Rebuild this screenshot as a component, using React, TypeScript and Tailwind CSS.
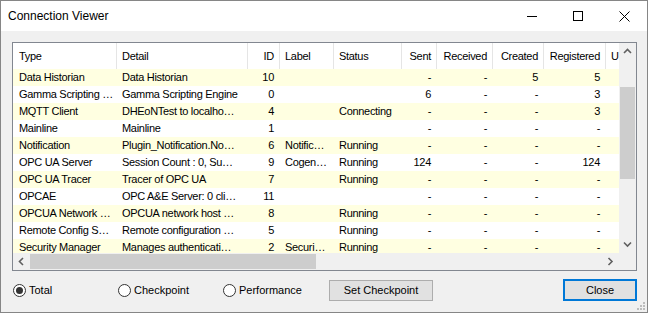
import React from 'react';

const cols = [
  { label: 'Type', cls: 'w-[104px] pl-[6px]', right: false },
  { label: 'Detail', cls: 'w-[131px] pl-[5px]', right: false },
  { label: 'ID', cls: 'w-[32px] pr-[5px] justify-end', right: true },
  { label: 'Label', cls: 'w-[54px] pl-[5px]', right: false },
  { label: 'Status', cls: 'w-[68px] pl-[5px]', right: false },
  { label: 'Sent', cls: 'w-[35px] pr-[5px] justify-end', right: true },
  { label: 'Received', cls: 'w-[56px] pr-[5px] justify-end', right: true },
  { label: 'Created', cls: 'w-[51px] pr-[5px] justify-end', right: true },
  { label: 'Registered', cls: 'w-[62px] pr-[5px] justify-end', right: true },
  { label: 'U', cls: 'w-[80px] pl-[5px]', right: false },
];

const rowCls = [
  'w-[104px] pl-[6px]',
  'w-[131px] pl-[5px]',
  'w-[32px] pr-[6px] text-right',
  'w-[54px] pl-[5px]',
  'w-[68px] pl-[5px]',
  'w-[35px] pr-[6px] text-right',
  'w-[56px] pr-[6px] text-right',
  'w-[51px] pr-[6px] text-right',
  'w-[62px] pr-[6px] text-right',
  'w-[80px] pl-[5px]',
];

const rows = [
  ['Data Historian', 'Data Historian', '10', '', '', '-', '-', '5', '5', ''],
  ['Gamma Scripting …', 'Gamma Scripting Engine', '0', '', '', '6', '-', '-', '3', ''],
  ['MQTT Client', 'DHEoNTest to localho…', '4', '', 'Connecting', '-', '-', '-', '3', ''],
  ['Mainline', 'Mainline', '1', '', '', '-', '-', '-', '-', ''],
  ['Notification', 'Plugin_Notification.No…', '6', 'Notific…', 'Running', '-', '-', '-', '-', ''],
  ['OPC UA Server', 'Session Count : 0, Su…', '9', 'Cogen…', 'Running', '124', '-', '-', '124', ''],
  ['OPC UA Tracer', 'Tracer of OPC UA', '7', '', 'Running', '-', '-', '-', '-', ''],
  ['OPCAE', 'OPC A&E Server: 0 cli…', '11', '', '', '-', '-', '-', '-', ''],
  ['OPCUA Network …', 'OPCUA network host …', '8', '', 'Running', '-', '-', '-', '-', ''],
  ['Remote Config S…', 'Remote configuration …', '5', '', 'Running', '-', '-', '-', '-', ''],
  ['Security Manager', 'Manages authenticati…', '2', 'Securi…', 'Running', '-', '-', '-', '-', ''],
];

function Chevron({ dir }: { dir: 'up' | 'down' | 'left' | 'right' }) {
  const pts = {
    up: '1,5 4.5,1.5 8,5',
    down: '1,1.5 4.5,5 8,1.5',
    left: '5,1 1.5,4.5 5,8',
    right: '1.5,1 5,4.5 1.5,8',
  }[dir];
  const vertical = dir === 'up' || dir === 'down';
  return (
    <svg width={vertical ? 9 : 7} height={vertical ? 7 : 9} viewBox={vertical ? '0 0 9 7' : '0 0 7 9'}>
      <polyline points={pts} fill="none" stroke="#606060" strokeWidth="1.6" />
    </svg>
  );
}

function Radio({ label, checked, w }: { label: string; checked?: boolean; w: string }) {
  return (
    <div className={`flex items-center gap-[3px] shrink-0 ${w}`}>
      <span className="w-[13px] h-[13px] rounded-full border border-[#333333] bg-white flex items-center justify-center">
        {checked && <span className="w-[7px] h-[7px] rounded-full bg-[#333333]" />}
      </span>
      <span>{label}</span>
    </div>
  );
}

export default function App() {
  return (
    <div className="relative w-[648px] h-[313px] border border-[#868686] bg-[#f0f0f0] flex flex-col font-['Liberation_Sans',Arial,sans-serif] text-black overflow-hidden">
      {/* title bar */}
      <div className="h-[30px] bg-white flex items-center shrink-0">
        <span className="pl-[7px] text-[12px]">Connection Viewer</span>
        <div className="ml-auto flex h-full">
          <div className="w-[46px] h-full flex items-center justify-center">
            <span className="w-[10px] h-px bg-black" />
          </div>
          <div className="w-[46px] h-full flex items-center justify-center">
            <span className="w-[10px] h-[10px] border border-black" />
          </div>
          <div className="w-[46px] h-full flex items-center justify-center">
            <svg width="11" height="11" viewBox="0 0 11 11">
              <path d="M0.5 0.5 L10.5 10.5 M10.5 0.5 L0.5 10.5" stroke="#000" strokeWidth="1" />
            </svg>
          </div>
        </div>
      </div>

      {/* body */}
      <div className="flex-1 flex flex-col pl-[11px] pr-[10px] pt-[11px]">
        {/* list view */}
        <div className="w-[625px] h-[229px] border border-[#828790] bg-white flex flex-col">
          <div className="flex h-[210px]">
            <div className="w-[606px] h-full overflow-hidden text-[11px] tracking-[-0.3px]">
              <div className="flex h-[26px] w-[673px]">
                {cols.map((c) => (
                  <div key={c.label} className={`${c.cls} shrink-0 h-full flex items-center border-r border-[#e5e5e5] whitespace-nowrap overflow-hidden`}>
                    {c.label}
                  </div>
                ))}
              </div>
              {rows.map((r, i) => (
                <div key={i} className={`flex h-[17px] w-[673px] leading-[17px] ${i % 2 === 0 ? 'bg-[#ffffe1]' : 'bg-white'}`}>
                  {r.map((v, j) => (
                    <div key={j} className={`${rowCls[j]} shrink-0 whitespace-nowrap overflow-hidden`}>
                      {v}
                    </div>
                  ))}
                </div>
              ))}
            </div>
            {/* vertical scrollbar */}
            <div className="w-[17px] h-full bg-[#f0f0f0] flex flex-col">
              <div className="h-[17px] flex items-center justify-center">
                <Chevron dir="up" />
              </div>
              <div className="flex-1 pt-[27px]">
                <div className="h-[92px] mx-[1px] bg-[#cdcdcd]" />
              </div>
              <div className="h-[17px] flex items-center justify-center">
                <Chevron dir="down" />
              </div>
            </div>
          </div>
          {/* horizontal scrollbar */}
          <div className="flex h-[17px]">
            <div className="w-[606px] h-full bg-[#f0f0f0] flex">
              <div className="w-[17px] h-full flex items-center justify-center">
                <Chevron dir="left" />
              </div>
              <div className="flex-1 py-[1px]">
                <div className="w-[286px] h-full bg-[#cdcdcd]" />
              </div>
              <div className="w-[17px] h-full flex items-center justify-center">
                <Chevron dir="right" />
              </div>
            </div>
            <div className="w-[17px] h-full bg-[#f0f0f0]" />
          </div>
        </div>

        {/* bottom controls */}
        <div className="mt-[8px] flex items-center h-[22px] text-[11px] pl-[1px]">
          <Radio label="Total" checked w="w-[105px]" />
          <Radio label="Checkpoint" w="w-[105px]" />
          <Radio label="Performance" w="w-[106px]" />
          <button className="w-[104px] h-[21px] border border-[#adadad] bg-[#e1e1e1] flex items-center justify-center">
            Set Checkpoint
          </button>
          <button className="ml-auto w-[74px] h-[22px] border-2 border-[#0078d7] bg-[#e1e1e1] flex items-center justify-center">
            Close
          </button>
        </div>
      </div>

      {/* size grip */}
      <svg className="absolute right-[2px] bottom-[2px]" width="8" height="8" viewBox="0 0 8 8">
        <rect x="6" y="0" width="2" height="2" fill="#bcbcbc" />
        <rect x="3" y="3" width="2" height="2" fill="#bcbcbc" />
        <rect x="6" y="3" width="2" height="2" fill="#bcbcbc" />
        <rect x="0" y="6" width="2" height="2" fill="#bcbcbc" />
        <rect x="3" y="6" width="2" height="2" fill="#bcbcbc" />
        <rect x="6" y="6" width="2" height="2" fill="#bcbcbc" />
      </svg>
    </div>
  );
}
